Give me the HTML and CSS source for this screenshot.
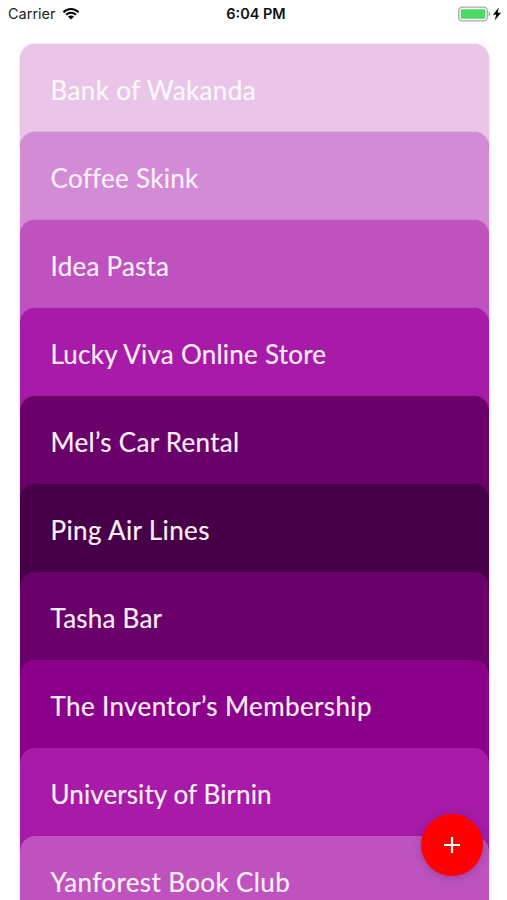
FILE: index.html
```html
<!DOCTYPE html>
<html lang="en">
<head>
<meta charset="utf-8">
<meta name="viewport" content="width=device-width">
<title>Wallet</title>
<link rel="stylesheet" href="styles.css">
</head>
<body>
<header class="status">
  <div class="carrier">
    <span>Carrier</span>
    <svg class="wifi" viewBox="0 0 18 13" width="18" height="13">
      <path d="M1.4 5.2C5.7.9 12.3.9 16.6 5.2M4.1 7.8c2.8-2.7 7-2.7 9.8 0" fill="none" stroke="#000" stroke-width="2.1"/>
      <path d="M9 12.6 5.9 9.6c1.8-1.6 4.4-1.6 6.2 0z"/>
    </svg>
  </div>
  <time class="clock">6:04 PM</time>
  <svg class="battery" viewBox="0 0 44 16" width="44" height="16">
    <rect x=".7" y="1.2" width="28.6" height="13.6" rx="3.6" fill="#fff" stroke="#aaa" stroke-width="1.3"/>
    <rect x="2.7" y="3.2" width="24.6" height="9.6" rx="1.2" fill="#4cd964"/>
    <path d="M30.7 5.6c1.9.6 1.9 4.2 0 4.8z" fill="#999"/>
    <path d="M40.8 1.6 35 8.8h3.2l-1.5 5.8 6.4-7.8h-3.4z"/>
  </svg>
</header>
<main class="stack">
  <article class="card tone-1"><h2 class="name loose">Bank of Wakanda</h2></article>
  <article class="card tone-2"><h2 class="name medium">Coffee Skink</h2></article>
  <article class="card tone-3"><h2 class="name snug">Idea Pasta</h2></article>
  <article class="card tone-4"><h2 class="name snug">Lucky Viva Online Store</h2></article>
  <article class="card tone-6"><h2 class="name medium">Mel’s Car Rental</h2></article>
  <article class="card tone-7"><h2 class="name loose">Ping Air Lines</h2></article>
  <article class="card tone-6"><h2 class="name snug">Tasha Bar</h2></article>
  <article class="card tone-5"><h2 class="name loose">The Inventor’s Membership</h2></article>
  <article class="card tone-4"><h2 class="name tight">University of Birnin</h2></article>
  <article class="card tone-3"><h2 class="name loose">Yanforest Book Club</h2></article>
</main>
<button class="add" aria-label="Add">
  <svg viewBox="0 0 16 16" width="16" height="16"><path d="M8 0v16M0 8h16" stroke="#fff" stroke-width="2.2"/></svg>
</button>
</body>
</html>
```
FILE: styles.css
```css
* { box-sizing: border-box; }
body {
  margin: 0;
  height: 900px;
  overflow: hidden;
  background: #fff;
  font-family: Lato, "Open Sans", sans-serif;
}
.status {
  display: grid;
  grid-template-columns: 1fr auto 1fr;
  align-items: center;
  height: 27px;
  padding: 0 5px 0 8px;
  font: 14.5px/27px Inter, sans-serif;
  color: #222;
}
.carrier { display: flex; align-items: center; gap: 6px; }
.clock { padding-left: 2px; font-weight: 600; color: #111; }
.battery { justify-self: end; }
.stack { padding: 16.5px 18.5px 0 19.5px; }
.card {
  height: 104px;
  margin-bottom: -16px;
  padding: 29px 31px 0;
  border-radius: 15px 15px 0 0;
  box-shadow: 0 0 1.5px rgba(100, 0, 100, .35);
}
.name {
  margin: 0;
  font-size: 26px;
  font-weight: 400;
  line-height: 34px;
  color: #fff0fd;
  white-space: nowrap;
  -webkit-text-stroke: .15px #fff0fd;
}
.tight { letter-spacing: .1px; }
.snug { letter-spacing: .24px; }
.medium { letter-spacing: .3px; }
.loose { letter-spacing: .38px; }
.tone-1 { background: #e9c6e7; }
.tone-1 .name { color: #fff9ff; }
.tone-2 { background: #d28bd4; }
.tone-3 { background: #be53bf; }
.tone-4 { background: #a81aa8; }
.tone-5 { background: #8b008b; }
.tone-6 { background: #6a006a; }
.tone-7 { background: #470047; }
.add {
  position: fixed;
  left: 421px;
  top: 814px;
  display: grid;
  place-items: center;
  width: 62px;
  height: 62px;
  padding: 0;
  border: 0;
  border-radius: 50%;
  background: #f00;
  box-shadow: 0 2px 8px rgba(60, 0, 80, .25);
}
```
